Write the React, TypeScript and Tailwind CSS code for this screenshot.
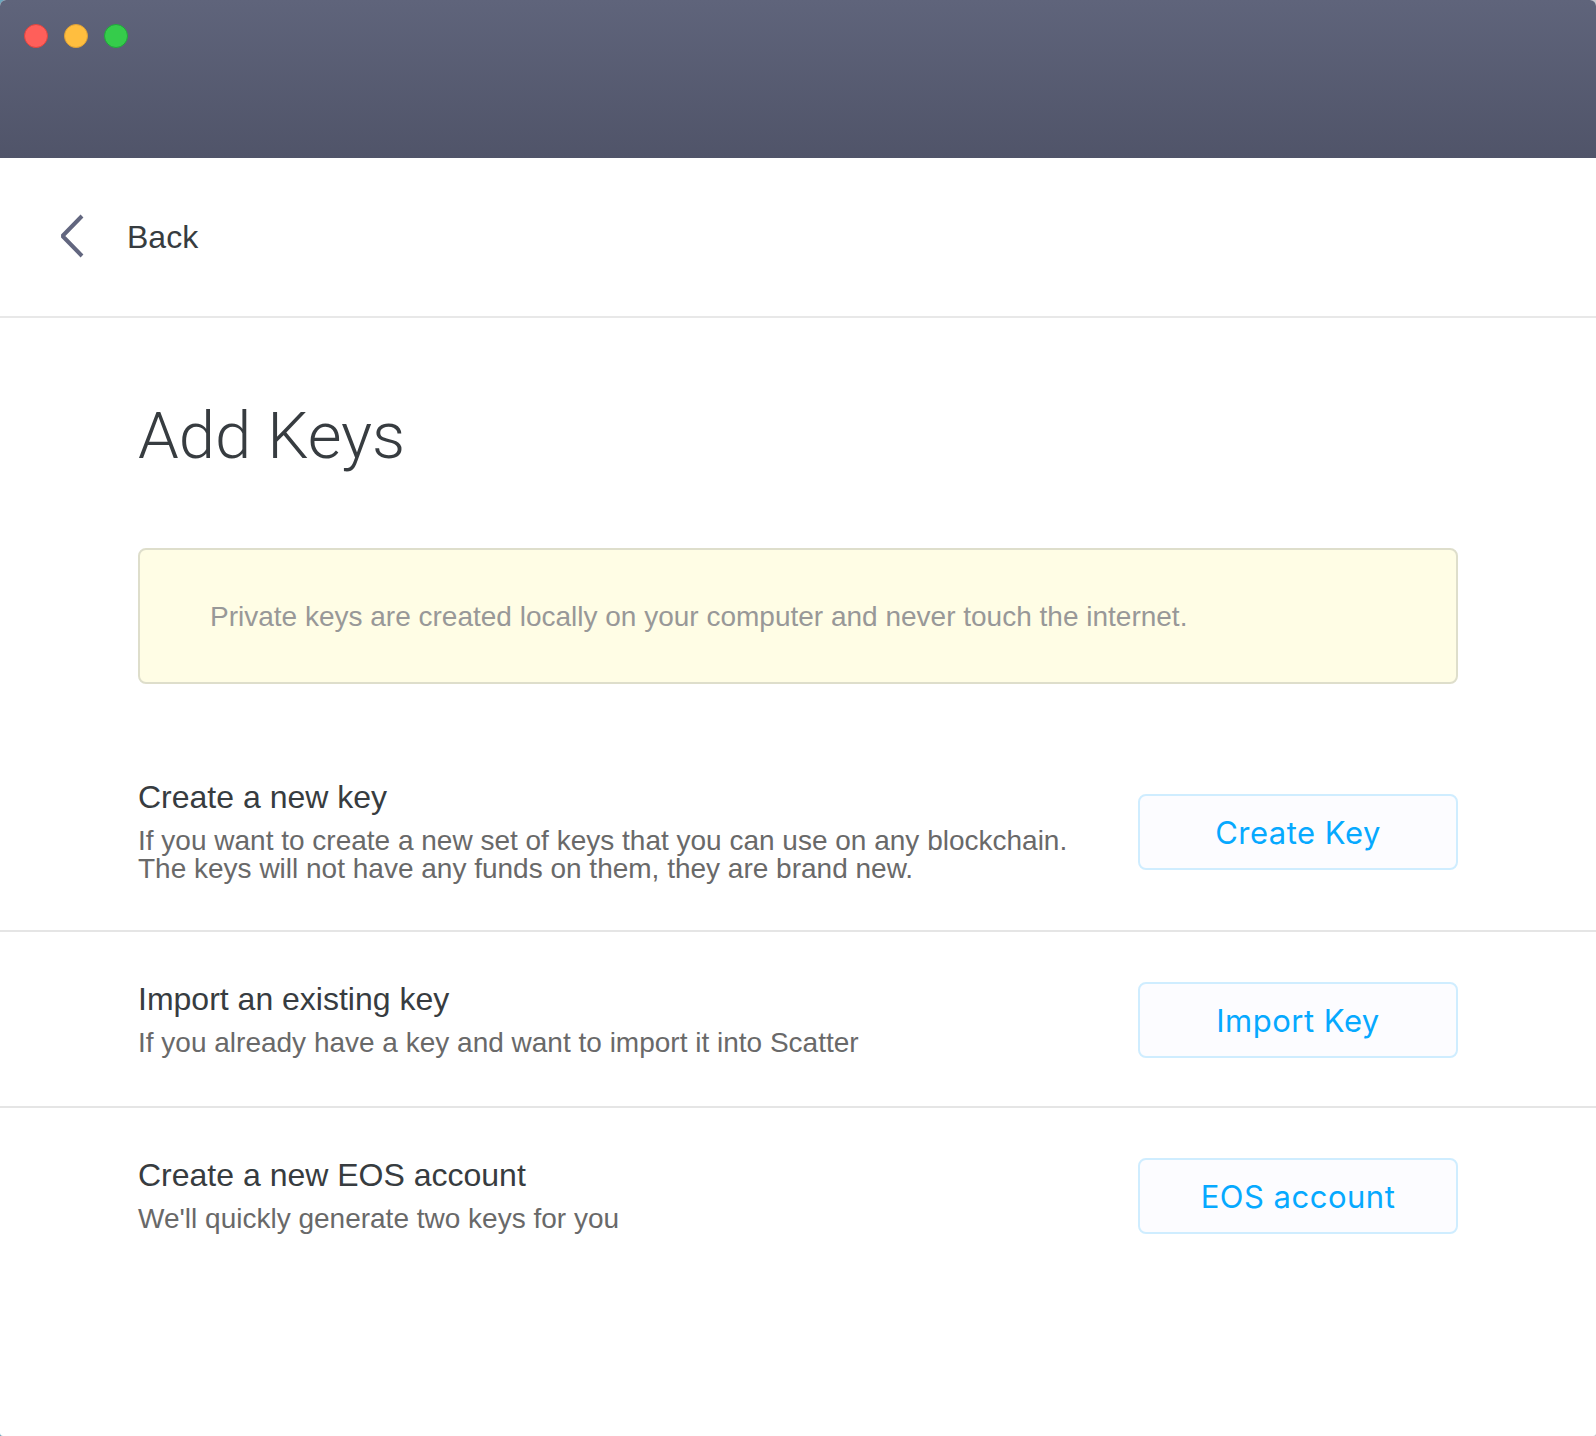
import React from 'react';

interface KeyOption {
    title: string;
    lines: string[];
    action: string;
}

const options: KeyOption[] = [
    {
        title: 'Create a new key',
        lines: [
            'If you want to create a new set of keys that you can use on any blockchain.',
            'The keys will not have any funds on them, they are brand new.',
        ],
        action: 'Create Key',
    },
    {
        title: 'Import an existing key',
        lines: ['If you already have a key and want to import it into Scatter'],
        action: 'Import Key',
    },
    {
        title: 'Create a new EOS account',
        lines: ["We'll quickly generate two keys for you"],
        action: 'EOS account',
    },
];

export default function App() {
    return (
        <div className="h-[1436px] w-[1596px] overflow-hidden bg-linear-to-r from-[#6aa5bd] via-[#a9adb5] to-[#c4c6cc]">
            <div className="h-full overflow-hidden rounded-t-[6px] rounded-b-[3px] bg-white font-['Liberation_Sans',sans-serif] text-[#373c40]">
                {/* Title bar */}
                <header className="flex h-[158px] gap-4 bg-linear-to-b from-[#5f647b] to-[#505469] px-6 pt-6">
                    <span className="size-6 rounded-full border border-[#e0443e] bg-[#ff5f5a]" />
                    <span className="size-6 rounded-full border border-[#dea035] bg-[#ffbe3f]" />
                    <span className="size-6 rounded-full border border-[#1fa83a] bg-[#35cc4b]" />
                </header>

                {/* Back */}
                <nav className="flex h-[160px] items-center border-b-2 border-[#e8e8e8] pl-[60px]">
                    <svg className="mb-[2px]" width="24" height="44" viewBox="0 0 24 44" fill="none" stroke="#62667f" strokeWidth="4" strokeLinejoin="bevel">
                        <path d="M22 2 2.5 22 22 42" />
                    </svg>
                    <span className="pl-[43px] text-[32px]">Back</span>
                </nav>

                <main>
                    <h1 className="px-[138px] pt-[80px] font-[Roboto,sans-serif] text-[65.3px] leading-[76px] font-light">
                        Add Keys
                    </h1>
                    <div className="mx-[138px] mt-[74px] flex h-[136px] items-center rounded-[8px] border-2 border-[#dedecb] bg-[#fffde5] px-[70px] pt-[2px] text-[28px] text-[#989898]">
                        Private keys are created locally on your computer and never touch the internet.
                    </div>

                    <div className="divide-y-2 divide-[#e5e5e5] pt-[48px]">
                        {options.map(option => (
                            <section key={option.title} className="flex items-center justify-between px-[138px] pt-[50px] pb-[48px]">
                                <div>
                                    <h2 className="text-[32px] leading-[30px]">{option.title}</h2>
                                    <p className="mt-[15px] -mb-px text-[28px] leading-[28px] text-[#696969]">
                                        {option.lines.map(line => (
                                            <span key={line} className="block whitespace-nowrap">{line}</span>
                                        ))}
                                    </p>
                                </div>
                                <button className="h-[76px] w-[320px] rounded-[8px] border-2 border-[#cfedff] bg-[#fcfcff] pt-[3px] font-[Inter,sans-serif] text-[31px] tracking-[0.5px] text-[#06a9ff]">
                                    {option.action}
                                </button>
                            </section>
                        ))}
                    </div>
                </main>
            </div>
        </div>
    );
}
